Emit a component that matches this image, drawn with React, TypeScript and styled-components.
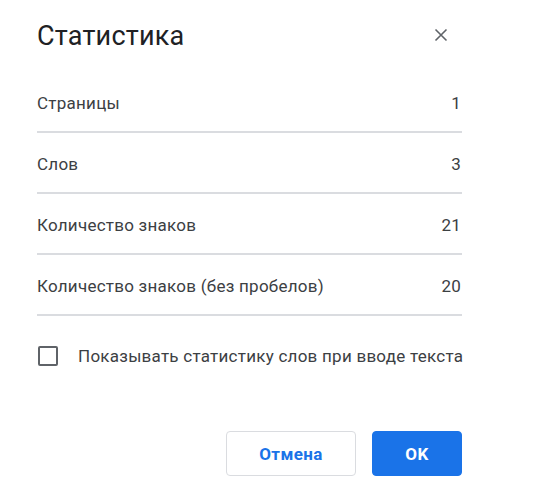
import React from "react";
import styled, { createGlobalStyle } from "styled-components";

const Global = createGlobalStyle`
  html, body { margin: 0; padding: 0; background: #ffffff; }
  body { font-family: Roboto, "Liberation Sans", sans-serif; }
`;

const Dialog = styled.div`
  width: 425px;
  padding: 0 0 0 37px;
  box-sizing: content-box;
  display: flex;
  flex-direction: column;
`;

const Header = styled.div`
  height: 72px;
  display: flex;
  align-items: center;
  justify-content: space-between;
`;

const Title = styled.h1`
  margin: 0;
  font-family: Roboto, "Liberation Sans", sans-serif;
  font-weight: 400;
  font-size: 27px;
  letter-spacing: 0.2px;
  color: #202124;
`;

const CloseButton = styled.button`
  border: none;
  background: none;
  padding: 0;
  margin-right: 11px;
  margin-top: -2px;
  width: 20px;
  height: 20px;
  display: flex;
  align-items: center;
  justify-content: center;
  cursor: pointer;
`;

const Row = styled.div`
  height: 61px;
  padding-top: 2px;
  box-sizing: border-box;
  display: flex;
  align-items: center;
  justify-content: space-between;
  border-bottom: 2px solid #dadce0;
  font-size: 17px;
  letter-spacing: 0.25px;
  color: #3c4043;
  white-space: nowrap;
`;

const Label = styled.span``;

const Value = styled.span`
  padding-right: 1px;
`;

const CheckRow = styled.label`
  display: flex;
  align-items: center;
  gap: 20px;
  margin-top: 28px;
  height: 24px;
  font-size: 17px;
  letter-spacing: 0.25px;
  color: #3c4043;
  white-space: nowrap;
`;

const Box = styled.span`
  width: 16px;
  height: 16px;
  border: 2px solid #5f6368;
  border-radius: 2px;
  margin-left: 1px;
  flex: none;
`;

const Actions = styled.div`
  display: flex;
  justify-content: flex-end;
  gap: 16px;
  margin-top: 63px;
`;

const Button = styled.button<{ $primary?: boolean }>`
  height: 45px;
  width: ${(p) => (p.$primary ? "90px" : "130px")};
  border-radius: 4px;
  font-family: Roboto, "Liberation Sans", sans-serif;
  font-weight: 700;
  font-size: 17px;
  letter-spacing: 0.4px;
  cursor: pointer;
  border: 1px solid ${(p) => (p.$primary ? "#1a73e8" : "#dadce0")};
  background: ${(p) => (p.$primary ? "#1a73e8" : "#ffffff")};
  color: ${(p) => (p.$primary ? "#ffffff" : "#1a73e8")};
`;

const stats = [
  { label: "Страницы", value: "1" },
  { label: "Слов", value: "3" },
  { label: "Количество знаков", value: "21" },
  { label: "Количество знаков (без пробелов)", value: "20" },
];

export default function App() {
  return (
    <>
      <Global />
      <Dialog>
        <Header>
          <Title>Статистика</Title>
          <CloseButton aria-label="Закрыть">
            <svg width="20" height="20" viewBox="0 0 20 20">
              <path d="M4.5 4.5 L15.5 15.5 M15.5 4.5 L4.5 15.5" stroke="#5f6368" strokeWidth="1.6" />
            </svg>
          </CloseButton>
        </Header>
        {stats.map((s) => (
          <Row key={s.label}>
            <Label>{s.label}</Label>
            <Value>{s.value}</Value>
          </Row>
        ))}
        <CheckRow>
          <Box />
          Показывать статистику слов при вводе текста
        </CheckRow>
        <Actions>
          <Button>Отмена</Button>
          <Button $primary>OK</Button>
        </Actions>
      </Dialog>
    </>
  );
}
